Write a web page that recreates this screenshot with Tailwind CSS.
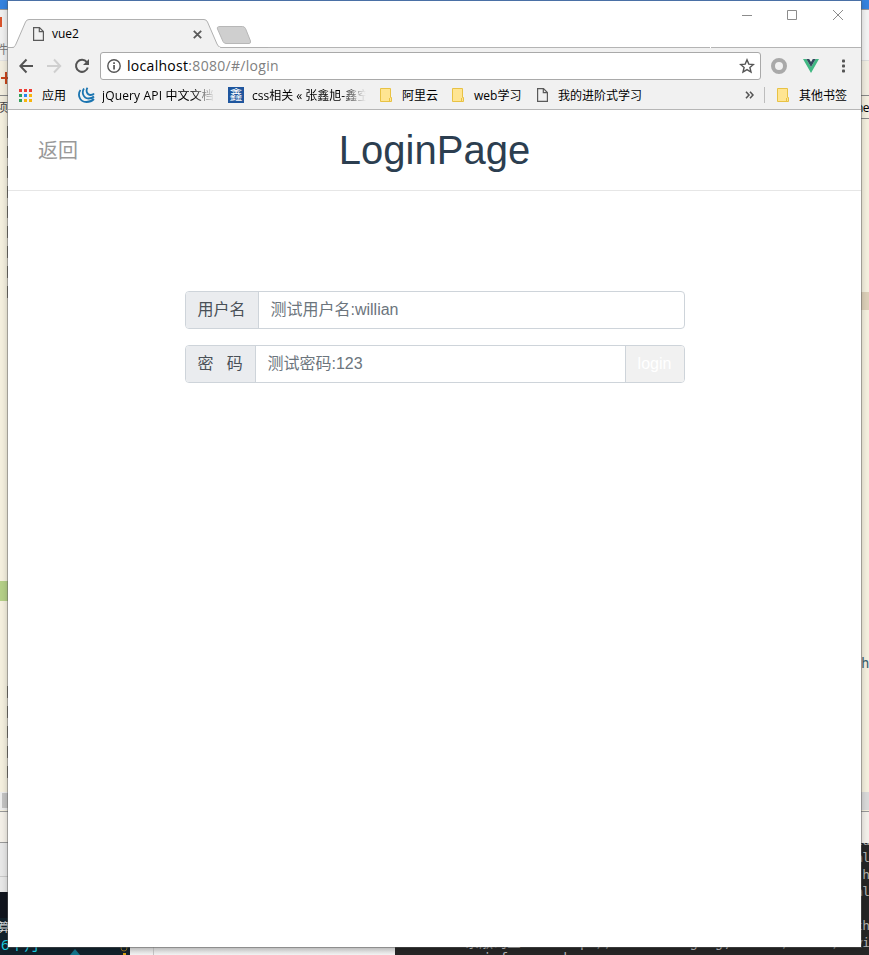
<!DOCTYPE html>
<html lang="zh-CN">
<head>
<meta charset="utf-8">
<title>vue2</title>
<script src="https://cdn.jsdelivr.net/npm/@tailwindcss/browser@4"></script>
</head>
<body class="relative w-[869px] h-[955px] overflow-hidden bg-[#f5f0df] font-['Open_Sans','Noto_Sans_CJK_SC',sans-serif]">

<!-- Desktop behind the browser: left edge -->
<div class="absolute left-0 top-0 w-2 h-[955px] overflow-hidden text-[12px] leading-[16px] text-[#444]">
  <div class="h-[9px] bg-[#3583df]"></div>
  <div class="h-[51px] bg-[#f0f0f0] border-t border-[#999]"></div>
  <div class="h-[35px] bg-[#f3eedf] border-t border-[#e2e2e2]"></div>
  <div class="h-[17px] bg-[#f1ecdc] border-t border-[#888]"></div>
  <div class="absolute left-0 top-[17px] w-[2px] h-[10px] bg-[#d9532c]"></div>
  <div class="absolute left-[-4px] top-[42px] whitespace-nowrap text-[#777]">件</div>
  <div class="absolute left-[1px] top-[77px] w-[7px] h-[2px] bg-[#c8451b]"></div>
  <div class="absolute left-[5px] top-[72px] w-[2px] h-[12px] bg-[#c8451b]"></div>
  <div class="absolute left-[-4px] top-[100px] whitespace-nowrap">项</div>
  <div class="absolute left-0 top-[581px] w-2 h-5 bg-[#b5d088]"></div>
  <div class="absolute left-0 top-[792px] w-2 h-[18px] bg-[#ededed]"></div>
  <div class="absolute left-[2px] top-[793px] w-[6px] h-[15px] bg-[#c4c4c4]"></div>
  <div class="absolute left-0 top-[811px] w-2 h-[32px] bg-[#f4f0e8] border-y border-[#999]"></div>
  <div class="absolute left-0 top-[843px] w-2 h-[49px] bg-[#e8e8e8]"></div>
  <div class="absolute left-0 top-[876px] w-2 h-px bg-[#c9c9c9]"></div>
</div>

<!-- Desktop behind the browser: right edge -->
<div class="absolute left-[861px] top-0 w-2 h-[843px] overflow-hidden">
  <div class="h-[9px] bg-[#3583df]"></div>
  <div class="h-[51px] bg-[#f4f4f4] border-t border-[#999]"></div>
  <div class="h-[35px] bg-[#f2eee2] border-t border-[#ddd]"></div>
  <div class="h-[24px] bg-[#f4efe0] border-y border-[#888]"></div>
  <div class="absolute right-0 top-[100px] text-[12px] leading-[16px] tracking-[-0.5px] text-black">ne</div>
  <div class="absolute left-0 top-[292px] w-2 h-[18px] bg-[#ddd0b9]"></div>
  <div class="absolute left-0 top-[655px] text-[14px] leading-[16px] text-[#3a6170] font-['DejaVu_Sans_Mono',monospace]">h</div>
  <div class="absolute left-0 top-[792px] w-2 h-[18px] bg-[#dadada]"></div>
  <div class="absolute left-0 top-[811px] w-2 h-[32px] bg-[#f4f1eb] border-t border-[#999]"></div>
</div>

<!-- Desktop behind the browser: bottom strip -->
<div class="absolute left-0 top-[892px] w-[130px] h-[63px] overflow-hidden bg-[#12212b] text-[12px] whitespace-nowrap">
  <div class="h-[26px] bg-[#11151e]"></div>
  <div class="absolute left-[-2px] top-[27px] leading-[18px] text-[#ddd]">算</div>
  <div class="absolute left-[1px] top-[43px] text-[15px] leading-[18px] text-[#18d3e6]">6个月</div>
  <svg class="absolute left-[66px] top-[57px]" width="18" height="6" viewBox="0 0 18 6"><path d="M9 0 14 6H4z" fill="#12748b"/></svg>
  <svg class="absolute left-[119px] top-[53px]" width="10" height="10" viewBox="0 0 10 10"><circle cx="5" cy="3" r="3" fill="none" stroke="#896a22"/><path d="M4 8h3v2H4z" fill="#d8a313"/></svg>
</div>
<div class="absolute left-[130px] top-[940px] w-[265px] h-[15px] bg-linear-to-b from-[#bbb] to-[#f4f4f4]"><div class="ml-[23px] w-px h-full bg-[#c5c5c5]"></div></div>
<div class="absolute left-[395px] top-[843px] w-[474px] h-[112px] overflow-hidden bg-[#262626] font-['DejaVu_Sans_Mono','Noto_Sans_CJK_SC',monospace] text-[14px] leading-[17px] text-[#b4b4b4] whitespace-pre">
  <div class="absolute right-0 top-[-11px] text-right text-[13px] tracking-[-1px]">tu<br>al<br> h<br>al<br><br>th<br>vi</div>
  <div class="absolute left-[70px] top-[91px]">系淑司空    http://         g  g,      /     /</div>
  <div class="absolute left-[88px] top-[107px]">info     d</div>
</div>

<!-- Browser window -->
<div class="absolute left-2 top-0 w-[853px] h-[947px] bg-white border-t border-[#4a70a6] flex flex-col shadow-[0_0_0_1px_rgba(90,90,90,.45),0_1px_7px_rgba(0,0,0,.25)]">

  <!-- Tab strip -->
  <div class="relative h-[47px] shrink-0 border-b border-[#b4b4b4]">
    <svg class="absolute left-0 top-0" width="260" height="47" viewBox="0 0 260 47">
      <path d="M5 47C7 46 7 45 8 43L17.5 21Q18.5 18.500 21 18.500H196Q198.500 18.500 199.500 21L209 43Q210.500 46.500 213 46.500V47z" fill="#f1f1f1"/>
      <path d="M0 46.500H4C6.500 46.500 7 45 8 43L17.500 21Q18.500 18.500 21 18.500H196Q198.500 18.500 199.500 21L209 43Q210.500 46.500 213 46.500H260" fill="none" stroke="#b0b0b0"/>
      <path d="M212 25.500H234.500Q236.500 25.500 237.500 27.500L242.500 40Q243 42.500 241 42.500H218Q216 42.500 215 40.500L209.500 28Q208.500 25.500 212 25.500z" fill="#cfcfcf" stroke="#b7b7b7"/>
    </svg>
    <div class="absolute left-0 right-0 top-[46px] h-px"><div class="ml-[702px] w-px h-px bg-white"></div></div>
    <div class="absolute left-[8px] top-[46px] w-[204px] h-px bg-[#f1f1f1]"></div>
    <div class="absolute left-[25px] top-[25px] w-[170px] h-4 flex items-center">
      <svg width="11" height="14" viewBox="0 0 11 14" fill="none" stroke="#5a5a5a" stroke-width="1.200"><path d="M.6.600H6.500L10.400 4.500V13.400H.6zM6.300.600V4.700H10.400"/></svg>
      <span class="ml-2 text-[12px] leading-4 text-black">vue2</span>
      <svg class="ml-auto mr-[1.500px]" width="9" height="9" viewBox="0 0 9 9"><path d="M.8.800 8.200 8.200M8.200.800.800 8.200" stroke="#5a5a5a" stroke-width="1.800"/></svg>
    </div>
    <div class="absolute right-[16px] top-[8px] flex items-center">
      <svg width="103" height="12" viewBox="0 0 103 12" fill="none" stroke="#8c8c8c"><path d="M0 6.500H10M45.500 1.500h9v9h-9zM91 1 101 11M101 1 91 11"/></svg>
    </div>
  </div>

  <!-- Toolbar -->
  <div class="h-[36px] shrink-0 bg-[#f1f1f1] flex items-center pl-[11px] pr-[12px]">
    <svg width="72" height="16" viewBox="0 0 72 16" fill="none" stroke-width="2">
      <path d="M14 8H1.500M7.500 1.500 1.300 8 7.500 14.500" stroke="#545454"/>
      <path d="M28 8H40.500M35 1.500 41.200 8 35 14.500" stroke="#cfcfcf"/>
      <path d="M67.800 4.200A6 6 0 1 0 68.800 9.500" stroke="#545454"/><path d="M70 1V7H64z" fill="#545454"/>
    </svg>
    <div class="ml-[9px] w-[661px] h-[28px] bg-white border border-[#a9a9a9] rounded-[3px] flex items-center pl-[6px] pr-[5px]">
      <svg width="14" height="14" viewBox="0 0 14 14"><circle cx="7" cy="7" r="6.200" fill="none" stroke="#555" stroke-width="1.400"/><path d="M6.200 6h1.700v4.500H6.200zM6.200 3.300h1.700V5H6.200z" fill="#555"/></svg>
      <span class="ml-[6px] text-[14px] tracking-[0.3px] leading-5 text-black whitespace-nowrap">localhost<span class="text-[#808080]">:8080/#/login</span></span>
      <svg class="ml-auto" width="16" height="16" viewBox="0 0 16 16"><path d="M8 1.800 9.800 6.100 14.400 6.500 10.900 9.500 12 14 8 11.600 4 14 5.100 9.500 1.600 6.500 6.200 6.100z" fill="none" stroke="#555" stroke-width="1.400"/></svg>
    </div>
    <svg class="ml-[10px]" width="16" height="16" viewBox="0 0 16 16"><circle cx="8" cy="8" r="6" fill="none" stroke="#a9a9a9" stroke-width="4"/></svg>
    <svg class="ml-[16px]" width="16" height="14" viewBox="0 0 16 14"><path d="M0 0H3.300L8 8 12.700 0H16L8 14z" fill="#41b883"/><path d="M3.300 0H6.200L8 3 9.800 0H12.700L8 8z" fill="#34495e"/></svg>
    <svg class="ml-[22px]" width="5" height="14" viewBox="0 0 5 14" fill="#555"><rect x="1" y=".5" width="3" height="3" rx=".8"/><rect x="1" y="5.500" width="3" height="3" rx=".8"/><rect x="1" y="10.500" width="3" height="3" rx=".8"/></svg>
  </div>

  <!-- Bookmarks bar -->
  <div class="h-[26px] shrink-0 bg-[#f1f1f1] border-b border-[#b6b6b6] flex items-center pl-[11px] pb-[3px] text-[12px] text-black whitespace-nowrap">
    <svg width="13" height="13" viewBox="0 0 13 13"><path d="M0 0h3v3H0zM5 0h3v3H5zM10 0h3v3h-3z" fill="#ee3e35"/><path d="M0 5h3v3H0zM0 10h3v3H0z" fill="#30a05a"/><path d="M5 5h3v3H5z" fill="#2b87ee"/><path d="M10 5h3v3h-3zM5 10h3v3H5zM10 10h3v3h-3z" fill="#f7b50c"/></svg>
    <span class="ml-[10px] w-[36px] pt-[2px] leading-4">应用</span>
    <svg width="17" height="16" viewBox="0 0 17 16" fill="none" stroke="#1a74b0" stroke-width="1.800"><path d="M2.500 3C-.5 7 1 15 8.500 15 12 15 14.500 13.500 16 12M6 1.500C3.500 5 5 11.500 10.500 11.500 13 11.500 15 10.500 16 9.500M9.500.800C7.500 3.500 9 8 12.500 8 14.500 8 15.500 7.300 16 6.500"/></svg>
    <span class="ml-[7px] w-[113px] pt-[2px] leading-4 tracking-[0.15px] overflow-hidden [mask-image:linear-gradient(to_right,black_80%,transparent)]">jQuery API 中文文档</span>
    <span class="ml-[13px] w-4 h-4 bg-[#1f569e] text-white text-[13px] leading-[15px] text-center overflow-hidden">鑫</span>
    <span class="ml-[8px] w-[114px] pt-[2px] leading-4 overflow-hidden [mask-image:linear-gradient(to_right,black_80%,transparent)]">css相关 « 张鑫旭-鑫空间</span>
    <svg class="ml-[14px]" width="12" height="14" viewBox="0 0 12 14"><path d="M.5.500h10v9h1v4H.5z" fill="#ffe592" stroke="#e8c244"/><path d="M9.500 13V10" stroke="#e8c244"/></svg>
    <span class="ml-[10px] w-[36px] pt-[2px] leading-4">阿里云</span>
    <svg class="ml-[14px]" width="12" height="14" viewBox="0 0 12 14"><path d="M.5.500h10v9h1v4H.5z" fill="#ffe592" stroke="#e8c244"/><path d="M9.500 13V10" stroke="#e8c244"/></svg>
    <span class="ml-[10px] w-[49px] pt-[2px] leading-4">web学习</span>
    <svg class="ml-[14px]" width="11" height="14" viewBox="0 0 11 14" fill="none" stroke="#5a5a5a" stroke-width="1.200"><path d="M.6.600H6.500L10.400 4.500V13.400H.6zM6.300.600V4.700H10.400"/></svg>
    <span class="ml-[10px] pt-[2px] leading-4">我的进阶式学习</span>
    <svg class="ml-auto" width="9" height="8" viewBox="0 0 9 8" fill="none" stroke="#555" stroke-width="1.600"><path d="M1 .800 4 4 1 7.200M5 .800 8 4 5 7.200"/></svg>
    <div class="ml-[10px] w-px h-4 bg-[#bdbdbd]"></div>
    <svg class="ml-[12px]" width="12" height="14" viewBox="0 0 12 14"><path d="M.5.500h10v9h1v4H.5z" fill="#ffe592" stroke="#e8c244"/><path d="M9.500 13V10" stroke="#e8c244"/></svg>
    <span class="ml-[10px] mr-[14px] pt-[2px] leading-4">其他书签</span>
  </div>

  <!-- Page -->
  <div class="flex-1 bg-white font-['Liberation_Sans','Noto_Sans_CJK_SC',sans-serif]">
    <header class="h-[81px] border-b border-[#e6e6e6] grid grid-cols-[1fr_auto_1fr] items-center">
      <a class="pl-[30px] pt-[2px] text-[20px] leading-6 text-[#999]">返回</a>
      <h1 class="text-[40px] leading-[48px] text-[#2c3e50]">LoginPage</h1>
    </header>
    <form class="mt-[100px] mx-auto w-[500px] flex flex-col gap-4 text-base">
      <div class="flex h-[38px] border border-[#ced4da] rounded overflow-hidden">
        <span class="w-[73px] pl-[12px] bg-[#eaecef] border-r border-[#ced4da] text-[#495057] leading-9 whitespace-nowrap">用户名</span>
        <span class="flex-1 pl-3 text-[#6c757d] leading-9">测试用户名:willian</span>
      </div>
      <div class="flex h-[38px] border border-[#ced4da] rounded overflow-hidden">
        <span class="w-[70px] pl-[12px] bg-[#eaecef] border-r border-[#ced4da] text-[#495057] leading-9 whitespace-pre">密   码</span>
        <span class="flex-1 pl-3 text-[#6c757d] leading-9">测试密码:123</span>
        <span class="w-[59px] bg-[#f1f1f1] border-l border-[#ced4da] text-white text-center leading-9">login</span>
      </div>
    </form>
  </div>
</div>
<div class="absolute left-[7px] top-[126px] w-px h-[173px] bg-[repeating-linear-gradient(to_bottom,#5d5a55_0_12px,transparent_12px_20px)]"></div>
<div class="absolute left-[7px] top-[686px] w-px h-[92px] bg-[repeating-linear-gradient(to_bottom,#5d5a55_0_12px,transparent_12px_20px)]"></div>
</body>
</html>
